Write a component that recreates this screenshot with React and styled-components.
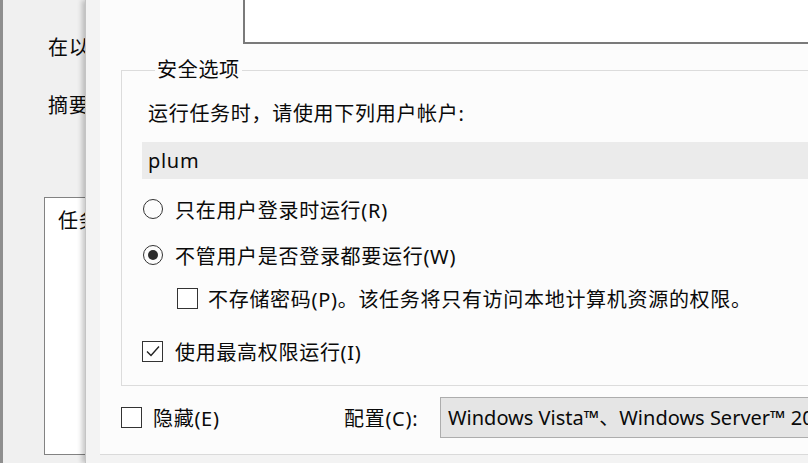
import styled, { createGlobalStyle } from "styled-components";

const Global = createGlobalStyle`
  html, body {
    margin: 0;
    padding: 0;
  }
  body {
    width: 808px;
    height: 463px;
    overflow: hidden;
    background: #f0f0f0;
    font-family: "Noto Sans", "Noto Sans CJK SC", sans-serif;
    font-size: 20px;
    letter-spacing: 0.7px;
    color: #0a0a0a;
  }
`;

const Screen = styled.div`
  display: flex;
  width: 808px;
  height: 463px;
  overflow: hidden;
`;

const BackWindow = styled.div`
  box-sizing: border-box;
  width: 85px;
  flex-shrink: 0;
  overflow: hidden;
  border-left: 3px solid #8f8f8f;
  background: #f0f0f0;
  display: flex;
  flex-direction: column;
  padding-top: 36px;
`;

const BackLabel = styled.div`
  padding-left: 45px;
  margin-top: ${(p) => p.gap || 0}px;
  line-height: 24px;
  white-space: nowrap;
`;

const BackBox = styled.div`
  box-sizing: border-box;
  margin: 79px 0 0 41px;
  width: 220px;
  height: 258px;
  flex-shrink: 0;
  background: #fff;
  border: 1px solid #828282;
  padding: 11px 0 0 13px;
  line-height: 24px;
  white-space: nowrap;
`;

const Dialog = styled.div`
  flex: 1;
  min-width: 0;
  position: relative;
  z-index: 1;
  background: #f3f3f3;
  border-left: 1px solid #c4c4c4;
  box-shadow: -3px 0 5px rgba(0, 0, 0, 0.22);
  padding: 0 0 8px 14px;
`;

const Panel = styled.div`
  box-sizing: border-box;
  height: 455px;
  background: #fcfcfc;
  border-bottom: 1px solid #dadada;
  display: flex;
  flex-direction: column;
`;

const TopBox = styled.div`
  box-sizing: border-box;
  margin-left: 143px;
  height: 44px;
  flex-shrink: 0;
  background: #fff;
  border-left: 2px solid #7a7a7a;
  border-bottom: 2px solid #7a7a7a;
`;

const Group = styled.fieldset`
  margin: 14px 0 0 21px;
  min-width: 0;
  border: 1px solid #dcdcdc;
  border-right: none;
  padding: 0 0 22px 20px;
`;

const Legend = styled.legend`
  margin-left: 13px;
  padding: 0 2px;
  line-height: 24px;
`;

const Desc = styled.div`
  margin: 20px 0 0 6px;
  line-height: 24px;
  white-space: nowrap;
`;

const AccountField = styled.div`
  margin-top: 16px;
  height: 37px;
  line-height: 37px;
  padding-left: 6px;
  background: #ebebeb;
`;

const OptionRow = styled.div`
  display: flex;
  align-items: center;
  gap: ${(p) => p.gap || 12}px;
  margin-top: ${(p) => p.top}px;
  margin-left: ${(p) => p.indent || 0}px;
  height: 24px;
  white-space: nowrap;
`;

const RadioCircle = styled.span`
  box-sizing: border-box;
  width: 20px;
  height: 20px;
  margin-left: 1px;
  border-radius: 50%;
  border: 1.5px solid #333;
  display: flex;
  align-items: center;
  justify-content: center;
  flex-shrink: 0;
  &::after {
    content: "";
    display: ${(p) => (p.checked ? "block" : "none")};
    width: 10px;
    height: 10px;
    border-radius: 50%;
    background: #2b2b2b;
  }
`;

const Box = styled.span`
  box-sizing: border-box;
  width: 21px;
  height: 21px;
  border: 1.5px solid #333;
  background: #fff;
  display: flex;
  align-items: center;
  justify-content: center;
  flex-shrink: 0;
`;

const BottomRow = styled.div`
  display: flex;
  align-items: center;
  margin-top: 11px;
  height: 41px;
  padding-left: 21px;
  white-space: nowrap;
`;

const HideOption = styled.div`
  display: flex;
  align-items: center;
  gap: 11px;
  width: 223px;
  flex-shrink: 0;
`;

const ConfigLabel = styled.div`
  width: 96px;
  flex-shrink: 0;
`;

const ConfigSelect = styled.div`
  flex: 1;
  min-width: 0;
  height: 41px;
  box-sizing: border-box;
  line-height: 39px;
  padding-left: 7px;
  letter-spacing: 0;
  background: #e5e5e5;
  border: 1px solid #adadad;
  border-right: none;
  overflow: hidden;
  white-space: nowrap;
`;

function Radio({ checked }) {
  return <RadioCircle checked={checked} />;
}

function Checkbox({ checked }) {
  return (
    <Box>
      {checked && (
        <svg width="16" height="16" viewBox="0 0 16 16">
          <polyline
            points="2,8.5 6,12.5 14,3.5"
            fill="none"
            stroke="#222"
            strokeWidth="1.4"
          />
        </svg>
      )}
    </Box>
  );
}

export default function App() {
  return (
    <>
      <Global />
      <Screen>
        <BackWindow>
          <BackLabel>在以下情况下</BackLabel>
          <BackLabel gap={34}>摘要</BackLabel>
          <BackBox>任务</BackBox>
        </BackWindow>
        <Dialog>
          <Panel>
            <TopBox />
            <Group>
              <Legend>安全选项</Legend>
              <Desc>运行任务时，请使用下列用户帐户:</Desc>
              <AccountField>plum</AccountField>
              <OptionRow top={18}>
                <Radio />
                只在用户登录时运行(R)
              </OptionRow>
              <OptionRow top={22}>
                <Radio checked />
                不管用户是否登录都要运行(W)
              </OptionRow>
              <OptionRow top={19} indent={35} gap={10}>
                <Checkbox />
                不存储密码(P)。该任务将只有访问本地计算机资源的权限。
              </OptionRow>
              <OptionRow top={29}>
                <Checkbox checked />
                使用最高权限运行(I)
              </OptionRow>
            </Group>
            <BottomRow>
              <HideOption>
                <Checkbox />
                隐藏(E)
              </HideOption>
              <ConfigLabel>配置(C):</ConfigLabel>
              <ConfigSelect>Windows Vista™、Windows Server™ 2008</ConfigSelect>
            </BottomRow>
          </Panel>
        </Dialog>
      </Screen>
    </>
  );
}
